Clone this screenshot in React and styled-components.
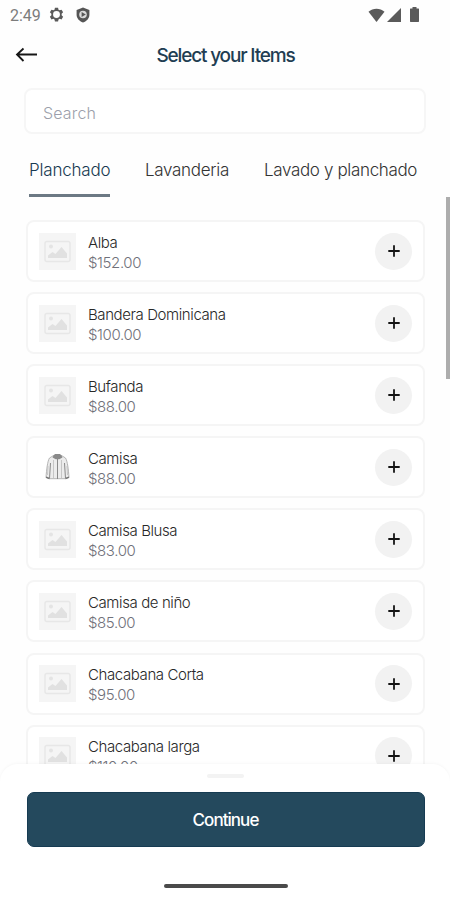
import React, {useState} from 'react';
import styled, {createGlobalStyle} from 'styled-components';

const GlobalStyle = createGlobalStyle`
    * {
      box-sizing: border-box;
    }

    body {
      margin: 0;
      background: #FEFEFE;
      font-family: Inter, "Liberation Sans", sans-serif;
      overflow: hidden;
    }
`

const Screen = styled.div`
    position: relative;
    display: flex;
    flex-direction: column;
    width: 450px;
    height: 900px;
    background: #FEFEFE;
    overflow: hidden;
`

const StatusBar = styled.div`
    display: flex;
    justify-content: space-between;
    flex-shrink: 0;
    height: 30px;
    padding: 0 31px 0 10px;
`

const StatusGroup = styled.div`
    display: flex;
    align-items: center;
    gap: ${props => props.gap}px;
    height: 29px;
`

const Time = styled.span`
    width: 31px;
    margin-right: -4px;
    padding-top: 1px;
    font-family: Roboto, sans-serif;
    font-size: 16px;
    color: #7C7C7C;
`

const Battery = styled.svg`
    margin-left: 7px;
`

const Header = styled.header`
    display: grid;
    grid-template-columns: 60px 1fr 60px;
    align-items: center;
    flex-shrink: 0;
    height: 50px;
`

const BackButton = styled.button`
    display: flex;
    width: 24px;
    margin-left: 15px;
    padding: 0;
    border: none;
    background: none;
    cursor: pointer;
`

const Title = styled.h1`
    margin: 0;
    padding-left: 1px;
    text-align: center;
    font-size: 19px;
    font-weight: 500;
    letter-spacing: -1.15px;
    color: #213D52;
`

const SearchInput = styled.input`
    flex-shrink: 0;
    width: 402px;
    height: 46px;
    margin: 8px 0 0 24px;
    padding: 4px 17px 0;
    border: 2px solid #F6F6F6;
    border-radius: 8px;
    background: #FFFFFF;
    font-family: inherit;
    font-size: 16px;
    font-weight: 300;
    letter-spacing: 0.15px;
    outline: none;

    &::placeholder {
      color: #9C9FAB;
      opacity: 1;
    }
`

const Tabs = styled.nav`
    display: flex;
    gap: 35px;
    flex-shrink: 0;
    height: 63px;
    padding: 24px 0 0 29px;
`

const Tab = styled.button`
    flex-shrink: 0;
    width: ${props => props.width}px;
    height: 39px;
    padding: 0 0 12px;
    border: none;
    border-bottom: 3px solid ${props => props.active ? '#6C7984' : 'transparent'};
    background: none;
    text-align: left;
    white-space: nowrap;
    font-family: inherit;
    font-size: 17px;
    font-weight: 300;
    letter-spacing: ${props => props.spacing}px;
    color: ${props => props.active ? '#173A51' : '#333333'};
    cursor: pointer;
`

const List = styled.div`
    display: flex;
    flex-direction: column;
    gap: 10.1px;
    flex: 1;
    min-height: 0;
    padding: 23px 25px 0 26px;
    overflow: hidden;
`

const Card = styled.div`
    display: flex;
    align-items: center;
    flex-shrink: 0;
    height: 62px;
    padding: 0 11px;
    border: 2px solid #F5F5F5;
    border-radius: 8px;
    background: #FFFFFF;
`

const Thumb = styled.div`
    display: flex;
    align-items: center;
    justify-content: center;
    width: 37px;
    height: 37px;
    background: ${props => props.empty ? '#F5F5F5' : 'transparent'};
`

const Info = styled.div`
    flex: 1;
    padding: 2px 0 0 12px;
    line-height: 20px;
    white-space: nowrap;
`

const Name = styled.div`
    padding-top: 1px;
    font-size: 15px;
    font-weight: 300;
    letter-spacing: -0.4px;
    color: #282828;
`

const Price = styled.div`
    font-size: 15px;
    font-weight: 300;
    letter-spacing: -0.4px;
    color: #70717A;
`

const AddButton = styled.button`
    display: flex;
    align-items: center;
    justify-content: center;
    width: 37px;
    height: 37px;
    padding: 0;
    border: none;
    border-radius: 50%;
    background: #F2F2F2;
    cursor: pointer;
`

const ScrollThumb = styled.div`
    position: absolute;
    top: 197px;
    right: 0;
    width: 4px;
    height: 182px;
    background: #ADADAD;
`

const Sheet = styled.footer`
    display: flex;
    flex-direction: column;
    align-items: center;
    flex-shrink: 0;
    height: 136px;
    padding: 10px 0 0 1px;
    border-radius: 18px 18px 0 0;
    background: #FFFFFF;
    box-shadow: 0 -1px 3px rgba(0, 0, 0, 0.03);
    z-index: 1;
`

const Handle = styled.div`
    width: 37px;
    height: 4px;
    border-radius: 2px;
    background: #F3F3F3;
`

const ContinueButton = styled.button`
    width: 398px;
    height: 55px;
    margin-top: 14px;
    padding: 0;
    border: 1px solid #163B52;
    border-radius: 7px;
    background: #24495D;
    font-family: inherit;
    font-size: 17px;
    font-weight: 500;
    letter-spacing: -0.95px;
    color: #FFFFFF;
    cursor: pointer;
`

const HomeIndicator = styled.div`
    width: 124px;
    height: 4px;
    margin-top: 37px;
    border-radius: 2px;
    background: #4A4A4A;
`

const tabs = [
    {title: 'Planchado', width: 81, spacing: -0.2},
    {title: 'Lavanderia', width: 84, spacing: -0.3},
    {title: 'Lavado y planchado', width: 155, spacing: -0.35}
]

const items = [
    {name: 'Alba', price: '$152.00'},
    {name: 'Bandera Dominicana', price: '$100.00'},
    {name: 'Bufanda', price: '$88.00'},
    {name: 'Camisa', price: '$88.00', shirt: true},
    {name: 'Camisa Blusa', price: '$83.00'},
    {name: 'Camisa de niño', price: '$85.00'},
    {name: 'Chacabana Corta', price: '$95.00'},
    {name: 'Chacabana larga', price: '$110.00'}
]

const GearIcon = () => (
    <svg width="15" height="15" viewBox="0 0 24 24" fill="#5A5A5A">
        <path fillRule="evenodd" d="M9.5 1h5l.7 3.2 1.8 1 3.1-1 2.5 4.3-2.4 2.2v2.6l2.4 2.2-2.5 4.3-3.1-1-1.8 1-.7 3.2h-5l-.7-3.2-1.8-1-3.1 1-2.5-4.3 2.4-2.2v-2.6L1.4 8.500l2.500-4.300 3.100 1 1.800-1zM12 6.500a5.500 5.500 0 1 0 0 11 5.500 5.500 0 0 0 0-11z"/>
    </svg>
)

const ShieldIcon = () => (
    <svg width="14" height="16" viewBox="0 0 14 16">
        <path d="M7 .5 13.4 3v4.5c0 3.8-2.5 6.6-6.4 8C3.100 14.100.6 11.300.6 7.500V3z" fill="#555555"/>
        <circle cx="7" cy="7.500" r="3.800" fill="#D8D8D8"/>
        <path d="m5.600 5 4.200 2.500-4.200 2.500z" fill="#555555"/>
    </svg>
)

const WifiIcon = () => (
    <svg width="17" height="14" viewBox="0 0 17 14">
        <path d="M.5 3.700C5-.3 12-.3 16.500 3.700L8.500 14z" fill="#5A5A5A"/>
    </svg>
)

const SignalIcon = () => (
    <svg width="14" height="14" viewBox="0 0 14 14">
        <path d="M14 0v14H0z" fill="#5A5A5A"/>
    </svg>
)

const BatteryIcon = () => (
    <Battery width="9" height="15" viewBox="0 0 9 15">
        <path d="M2.500 0h4v1.500H8.500q.5 0 .5.600v12.200q0 .7-.6.700H.6q-.6 0-.6-.7V2.100q0-.6.500-.6h2z" fill="#5A5A5A"/>
    </Battery>
)

const ArrowIcon = () => (
    <svg width="24" height="16" viewBox="0 0 24 16" fill="none" stroke="#161616" strokeWidth="1.800">
        <path d="M22 7.500H2M8.500 1.500 2 7.500l6.500 6.500"/>
    </svg>
)

const ImageIcon = () => (
    <svg width="27" height="23" viewBox="0 0 27 23">
        <rect x="1" y="1.500" width="25" height="20" rx="2" fill="none" stroke="#E7E7E7" strokeWidth="1.500"/>
        <circle cx="7" cy="6.500" r="2" fill="#E4E4E4"/>
        <path d="M4 18v-2.500l4.500-3.500 3 2L17.500 7l5.500 6.500V18z" fill="#E1E1E1"/>
    </svg>
)

const ShirtIcon = () => (
    <svg width="25" height="28" viewBox="0 0 25 28">
        <path d="M8.500 2.500 4.500 5C2.500 8 1.500 17 1 24.500l3.500 1.200h16l3.500-1.200C23.500 17 22.500 8 20.500 5l-4-2.500z" fill="#ECECEC" stroke="#A5A5A5" strokeWidth=".8"/>
        <path d="M8.500 2.500 10 1h5l1.500 1.500 1 2-3.300 1.800h-3.400L7.500 4.500z" fill="#8A8A8A"/>
        <path d="M12.500 5v21M5.500 10 4.500 25.500M19.500 10l1 15.500" fill="none" stroke="#8A8A8A" strokeWidth="1"/>
        <path d="M8.500 7v18.500M16.500 7v18.500M3 13l-.5 9M22 13l.5 9" fill="none" stroke="#BDBDBD" strokeWidth=".8"/>
        <path d="M1 24.200l3.400 1.300M20.600 25.500l3.400-1.300" stroke="#777777" strokeWidth="1.400"/>
    </svg>
)

const PlusIcon = () => (
    <svg width="12" height="12" viewBox="0 0 12 12" stroke="#151515" strokeWidth="1.800">
        <path d="M6 .3v11.400M.3 6h11.400"/>
    </svg>
)

const App = () => {

    const [activeTab, setActiveTab] = useState(0);
    const [search, setSearch] = useState('');

    return (
        <Screen>
            <GlobalStyle/>
            <StatusBar>
                <StatusGroup gap={12}>
                    <Time>2:49</Time>
                    <GearIcon/>
                    <ShieldIcon/>
                </StatusGroup>
                <StatusGroup gap={2}>
                    <WifiIcon/>
                    <SignalIcon/>
                    <BatteryIcon/>
                </StatusGroup>
            </StatusBar>
            <Header>
                <BackButton aria-label="Back"><ArrowIcon/></BackButton>
                <Title>Select your Items</Title>
            </Header>
            <SearchInput placeholder="Search" value={search} onChange={(e) => setSearch(e.target.value)}/>
            <Tabs>
                {tabs.map((tab, index) => (
                    <Tab key={tab.title} width={tab.width} spacing={tab.spacing} active={activeTab === index}
                         onClick={() => setActiveTab(index)}>{tab.title}</Tab>
                ))}
            </Tabs>
            <List>
                {items.map((item) => (
                    <Card key={item.name}>
                        <Thumb empty={!item.shirt}>{item.shirt ? <ShirtIcon/> : <ImageIcon/>}</Thumb>
                        <Info>
                            <Name>{item.name}</Name>
                            <Price>{item.price}</Price>
                        </Info>
                        <AddButton aria-label="Add"><PlusIcon/></AddButton>
                    </Card>
                ))}
            </List>
            <ScrollThumb/>
            <Sheet>
                <Handle/>
                <ContinueButton>Continue</ContinueButton>
                <HomeIndicator/>
            </Sheet>
        </Screen>
    );
};

export default App;
